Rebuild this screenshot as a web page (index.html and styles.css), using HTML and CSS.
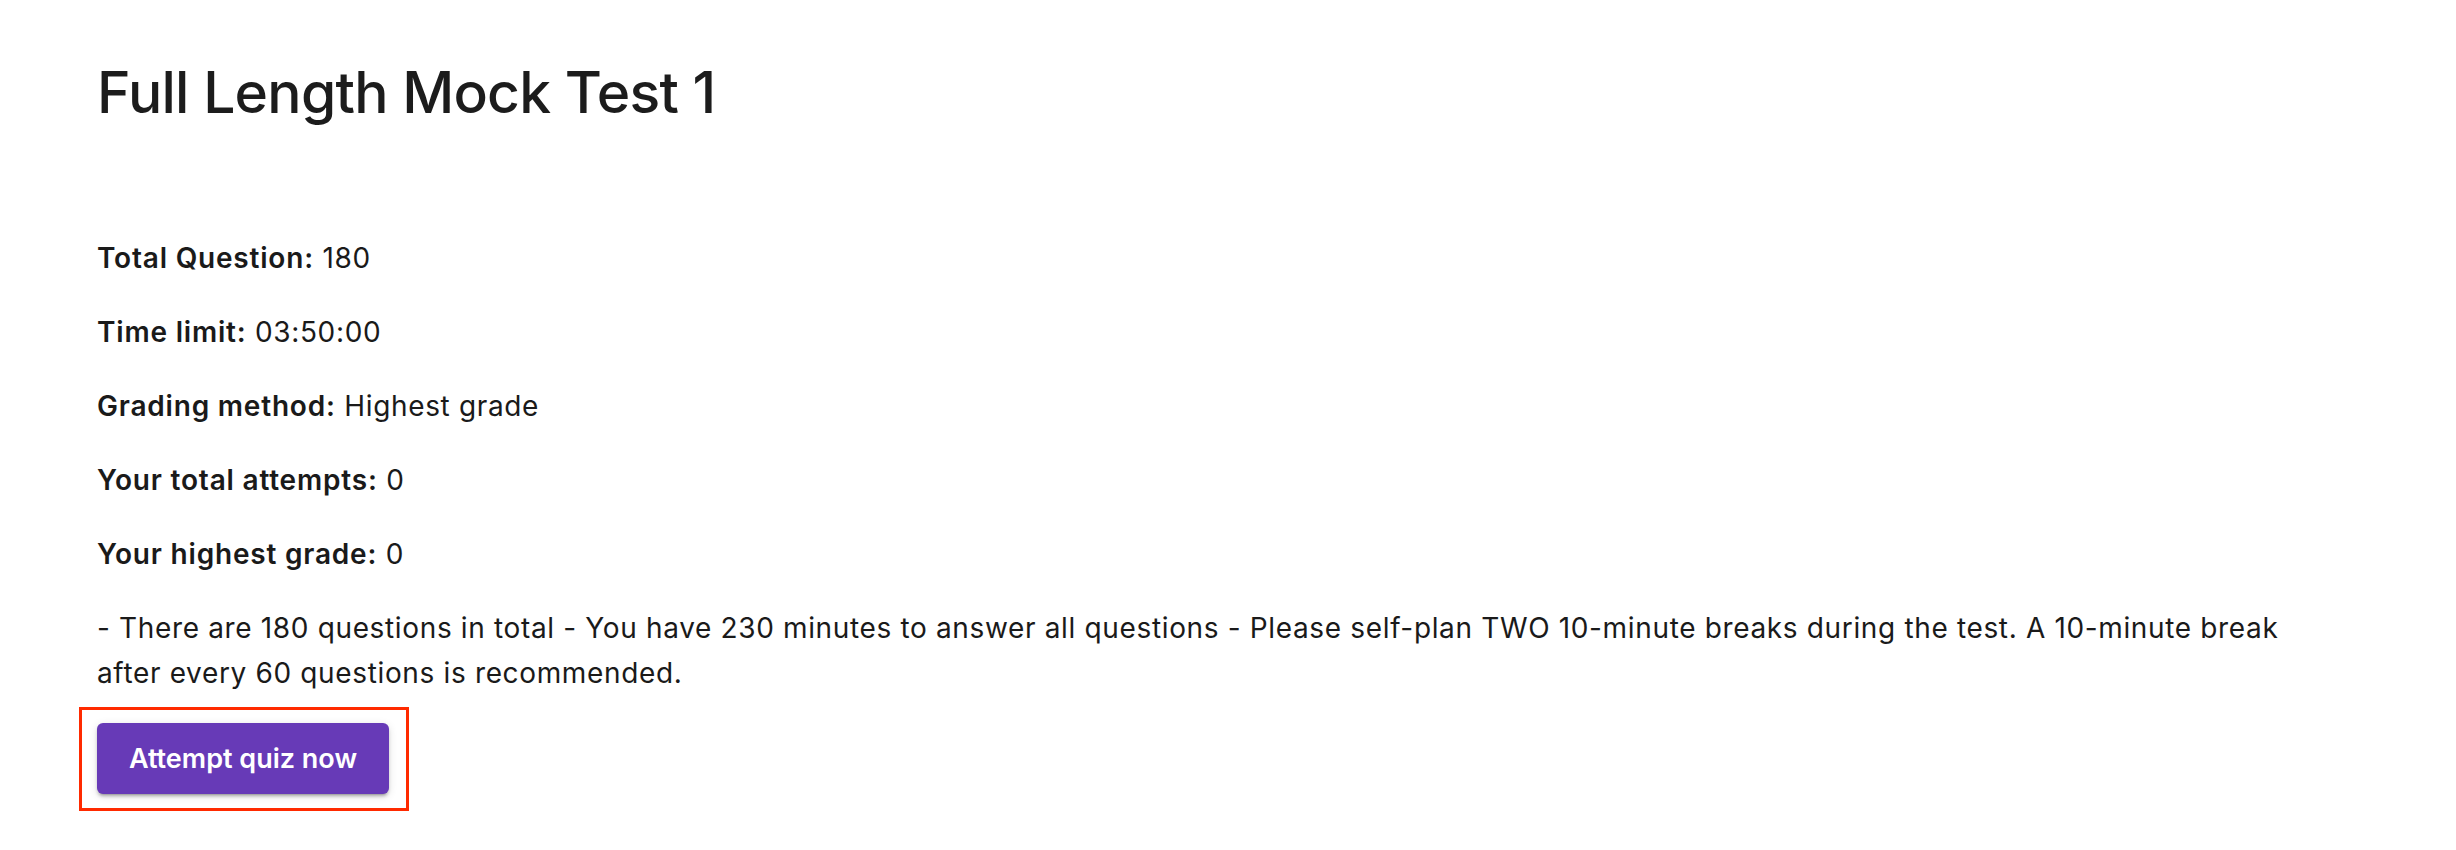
FILE: index.html
```html
<!DOCTYPE html>
<html lang="en">
<head>
<meta charset="utf-8">
<title>Full Length Mock Test 1</title>
<link rel="stylesheet" href="styles.css">
</head>
<body>
<main class="quiz">
  <h1 class="quiz-title">Full Length Mock Test 1</h1>
  <section class="quiz-info">
    <p class="info-row"><strong>Total Question:</strong> 180</p>
    <p class="info-row"><strong>Time limit:</strong> 03:50:00</p>
    <p class="info-row"><strong>Grading method:</strong> Highest grade</p>
    <p class="info-row"><strong>Your total attempts:</strong> 0</p>
    <p class="info-row"><strong>Your highest grade:</strong> 0</p>
    <p class="info-row">- There are 180 questions in total - You have 230 minutes to answer all questions - Please self-plan TWO 10-minute breaks during the test. A 10-minute break after every 60 questions is recommended.</p>
  </section>
  <div class="action">
    <span class="highlight">
      <button class="attempt-btn" type="button">Attempt quiz now</button>
    </span>
  </div>
</main>
</body>
</html>
```
FILE: styles.css
```css
html, body {
  margin: 0;
  padding: 0;
  background: #ffffff;
}

body {
  font-family: Inter, "Liberation Sans", sans-serif;
  color: #1a1a1a;
}

.quiz {
  padding: 59px 135px 40px 97px;
}

.quiz-title {
  margin: 0;
  font-size: 57px;
  line-height: 68px;
  font-weight: 500;
  letter-spacing: -0.75px;
  color: #1c1c1c;
}

.quiz-info {
  margin-top: 109px;
  display: flex;
  flex-direction: column;
  gap: 29px;
}

.info-row {
  margin: 0;
  font-size: 28px;
  line-height: 45px;
  font-weight: 400;
  letter-spacing: 0.65px;
}

.info-row strong {
  font-weight: 600;
  letter-spacing: 0.8px;
}

.action {
  margin-top: 27px;
}

.highlight {
  position: relative;
  display: inline-block;
}

.highlight::after {
  content: "";
  position: absolute;
  top: -16px;
  left: -18px;
  right: -20px;
  bottom: -17px;
  border: 3px solid #ff2a00;
  pointer-events: none;
}

.attempt-btn {
  display: block;
  width: 292px;
  height: 71px;
  border: none;
  border-radius: 6px;
  background: #673ab7;
  color: #ffffff;
  font-family: Inter, "Liberation Sans", sans-serif;
  font-size: 27px;
  font-weight: 600;
  box-shadow: 0 4px 2px -3px rgba(0,0,0,0.22), 0 3px 3px 0 rgba(0,0,0,0.15), 0 2px 8px 0 rgba(0,0,0,0.13);
  cursor: pointer;
}
```
